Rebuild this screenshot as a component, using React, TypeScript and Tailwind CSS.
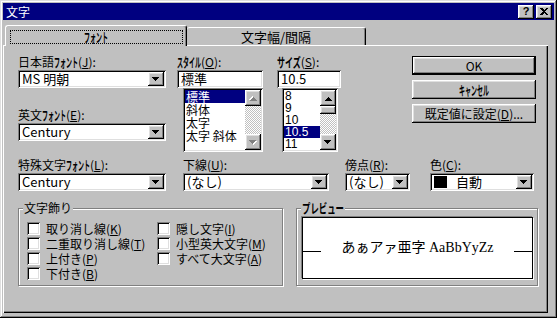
import React from "react";

const raised =
  "bg-[#c0c0c0] shadow-[inset_-1px_-1px_#000,inset_1px_1px_#fff,inset_-2px_-2px_#808080,inset_2px_2px_#dfdfdf]";
const sunken =
  "shadow-[inset_1px_1px_#808080,inset_-1px_-1px_#fff,inset_2px_2px_#000,inset_-2px_-2px_#dfdfdf]";
const checker =
  "bg-[repeating-conic-gradient(#c0c0c0_0%_25%,#ffffff_0%_50%)] bg-[length:2px_2px]";

// katakana squeezed to half width, like the old bitmap UI font
function H({ t, cols }: { t: string; cols?: number }) {
  const n = t.length;
  const target = (cols ?? n) * 6;
  return (
    <span
      className="inline-block origin-left whitespace-nowrap font-bold text-[13px]"
      style={{ transform: `scaleX(${target / (n * 13)})`, marginRight: target - n * 13 }}
    >
      {t}
    </span>
  );
}

function Arrow({ up = false, disabled = false }: { up?: boolean; disabled?: boolean }) {
  const d = "M0 0h7v1h-1v1h-1v1h-1v1h-1v-1h-1v-1h-1v-1h-1z";
  return (
    <svg width="8" height="5" viewBox="0 0 8 5" shapeRendering="crispEdges" className={up ? "rotate-180" : ""}>
      {disabled && <path d={d} fill="#fff" transform="translate(1 1)" />}
      <path d={d} fill={disabled ? "#808080" : "#000"} />
    </svg>
  );
}

function Label({ children }: { children: React.ReactNode }) {
  return <div className="h-[14px] mb-[1px] text-[12px] leading-[14px] whitespace-nowrap">{children}</div>;
}

function Combo({ className, children }: { className: string; children: React.ReactNode }) {
  return (
    <div className={`${className} h-[18px] p-[2px] flex bg-white ${sunken}`}>
      <div className="flex-1 flex items-center pl-[2px] text-[13px] leading-[14px] whitespace-nowrap">{children}</div>
      <div className={`w-[16px] flex items-center justify-center ${raised}`}>
        <Arrow />
      </div>
    </div>
  );
}

function Edit({ className, children }: { className: string; children: React.ReactNode }) {
  return (
    <div className={`${className} h-[18px] p-[2px] pl-[4px] flex items-center bg-white text-[13px] leading-[14px] ${sunken}`}>
      {children}
    </div>
  );
}

function Button({ children, def = false }: { children: React.ReactNode; def?: boolean }) {
  return (
    <div className={def ? "border border-black" : ""}>
      <div
        className={`${raised} ${def ? "h-[17px]" : "h-[19px]"} flex items-center justify-center text-[12px] leading-[14px]`}
      >
        {children}
      </div>
    </div>
  );
}

function Check({ children }: { children: React.ReactNode }) {
  return (
    <div className="h-[15px] flex items-center gap-[6px] text-[12px] leading-[14px] whitespace-nowrap">
      <div className={`w-[13px] h-[13px] bg-white ${sunken}`} />
      <span>{children}</span>
    </div>
  );
}

function Group({ className, title, children }: { className: string; title: React.ReactNode; children: React.ReactNode }) {
  return (
    <div className={`${className} relative h-[78px] border border-[#808080] shadow-[1px_1px_0_#fff,inset_1px_1px_0_#fff]`}>
      <span className="absolute -top-[8px] left-[4px] bg-[#c0c0c0] px-[1px] text-[12px] leading-[14px]">{title}</span>
      {children}
    </div>
  );
}

export default function App() {
  const styles = ["標準", "斜体", "太字", "太字 斜体"];
  const sizes = ["8", "9", "10", "10.5", "11"];

  return (
    <div className="w-[557px] h-[318px] bg-[#c0c0c0] p-[3px] text-black font-['Noto_Sans_CJK_JP','Noto_Sans',sans-serif] shadow-[inset_-1px_-1px_#000,inset_1px_1px_#dfdfdf,inset_-2px_-2px_#808080,inset_2px_2px_#fff] overflow-hidden">
      {/* Title bar */}
      <div className="h-[17px] bg-[#000080] flex items-center pl-[3px] pr-[2px]">
        <span className="flex-1 text-white text-[12px] leading-[14px]">文字</span>
        <div className={`${raised} w-[16px] h-[14px] flex items-center justify-center text-[11px] font-bold leading-none font-['Liberation_Sans',sans-serif]`}>
          ?
        </div>
        <div className={`${raised} ml-[2px] w-[16px] h-[14px] flex items-center justify-center`}>
          <svg width="8" height="7" viewBox="0 0 8 7" shapeRendering="crispEdges">
            <path d="M0 0h2l2 2 2-2h2l-3 3.5 3 3.5h-2l-2-2-2 2h-2l3-3.5z" fill="#000" />
          </svg>
        </div>
      </div>

      {/* Tabs */}
      <div className="h-[25px] flex items-end pl-[2px]">
        <div className="relative z-10 -mb-[1px] w-[182px] h-[21px] bg-[#c0c0c0] rounded-t-[3px] border-t border-l border-white border-r border-r-black shadow-[inset_-1px_0_#808080] pt-[4px] flex justify-center">
          <div className="w-[173px] h-[14px] border border-dotted border-black flex items-center justify-center text-[12px] leading-[12px]">
            <H t="フォント" />
          </div>
        </div>
        <div className="w-[179px] h-[18px] rounded-t-[3px] border-t border-white border-r border-r-black shadow-[inset_-1px_0_#808080] flex items-center justify-center text-[13px] leading-[14px]">
          文字幅/間隔
        </div>
      </div>

      {/* Panel */}
      <div className="w-[545px] h-[268px] shadow-[inset_1px_1px_#fff,inset_-1px_-1px_#000,inset_-2px_-2px_#808080] pt-[10px] pl-[15px]">
        {/* Row 1 */}
        <div className="flex items-start">
          <div className="w-[148px]">
            <Label>
              日本語<H t="フォント" />(<u>J</u>):
            </Label>
            <Combo className="w-[148px]">MS 明朝</Combo>
            <div className="mt-[20px]">
              <Label>
                英文<H t="フォント" />(<u>E</u>):
              </Label>
              <Combo className="w-[148px]">Century</Combo>
            </div>
          </div>

          <div className="ml-[11px] w-[86px]">
            <Label>
              <H t="スタイル" />(<u>O</u>):
            </Label>
            <Edit className="w-[86px]">標準</Edit>
            <div className={`ml-[6px] w-[80px] h-[64px] bg-white p-[2px] flex ${sunken}`}>
              <div className="flex-1 text-[12px] leading-[13px]">
                {styles.map((s, i) => (
                  <div key={s} className={`h-[13px] pl-[1px] whitespace-nowrap ${i === 0 ? "bg-[#000080] text-white" : ""}`}>
                    {s}
                  </div>
                ))}
              </div>
              <div className="w-[16px] flex flex-col">
                <div className={`${raised} h-[16px] flex items-center justify-center`}>
                  <Arrow up disabled />
                </div>
                <div className={`flex-1 ${checker}`} />
                <div className={`${raised} h-[16px] flex items-center justify-center`}>
                  <Arrow disabled />
                </div>
              </div>
            </div>
          </div>

          <div className="ml-[14px] w-[64px]">
            <Label>
              <H t="サイズ" cols={4} />(<u>S</u>):
            </Label>
            <Edit className="w-[64px]">10.5</Edit>
            <div className={`ml-[5px] w-[56px] h-[64px] bg-white p-[2px] flex ${sunken}`}>
              <div className="flex-1 text-[12px] leading-[12px] font-['Liberation_Sans',sans-serif]">
                {sizes.map((s, i) => (
                  <div key={s} className={`h-[12px] pl-[1px] ${i === 3 ? "bg-[#000080] text-white" : ""}`}>
                    {s}
                  </div>
                ))}
              </div>
              <div className="w-[16px] flex flex-col">
                <div className={`${raised} h-[16px] flex items-center justify-center`}>
                  <Arrow up />
                </div>
                <div className={`${raised} h-[8px]`} />
                <div className={`flex-1 ${checker}`} />
                <div className={`${raised} h-[16px] flex items-center justify-center`}>
                  <Arrow />
                </div>
              </div>
            </div>
          </div>

          <div className="ml-[71px] w-[124px] pt-[1px] flex flex-col gap-[5px]">
            <Button def>
              <span className="font-normal">OK</span>
            </Button>
            <Button>
              <H t="キャンセル" />
            </Button>
            <Button>
              既定値に設定(<u>D</u>)...
            </Button>
          </div>
        </div>

        {/* Row 2 */}
        <div className="mt-[6px] flex items-start">
          <div className="w-[148px]">
            <Label>
              特殊文字<H t="フォント" />(<u>L</u>):
            </Label>
            <Combo className="w-[148px]">Century</Combo>
          </div>
          <div className="ml-[17px] w-[146px]">
            <Label>
              下線(<u>U</u>):
            </Label>
            <Combo className="w-[146px]">(なし)</Combo>
          </div>
          <div className="ml-[16px] w-[65px]">
            <Label>
              傍点(<u>R</u>):
            </Label>
            <Combo className="w-[65px]">(なし)</Combo>
          </div>
          <div className="ml-[20px] w-[104px]">
            <Label>
              色(<u>C</u>):
            </Label>
            <Combo className="w-[104px]">
              <span className="w-[13px] h-[12px] bg-black mr-[9px]" />
              自動
            </Combo>
          </div>
        </div>

        {/* Row 3 */}
        <div className="mt-[17px] flex items-start">
          <Group className="w-[265px]" title="文字飾り">
            <div className="pt-[12px] pl-[8px] flex">
              <div className="w-[130px]">
                <Check>
                  取り消し線(<u>K</u>)
                </Check>
                <Check>
                  二重取り消し線(<u>T</u>)
                </Check>
                <Check>
                  上付き(<u>P</u>)
                </Check>
                <Check>
                  下付き(<u>B</u>)
                </Check>
              </div>
              <div>
                <Check>
                  隠し文字(<u>I</u>)
                </Check>
                <Check>
                  小型英大文字(<u>M</u>)
                </Check>
                <Check>
                  すべて大文字(<u>A</u>)
                </Check>
              </div>
            </div>
          </Group>

          <Group className="ml-[13px] w-[242px]" title={<H t="プレビュー" cols={7} />}>
            <div className="ml-[5px] mt-[8px] w-[231px] h-[62px] bg-white border border-black shadow-[-1px_-1px_0_#808080,1px_1px_0_#fff] flex items-center">
              <div className="w-full flex items-baseline">
                <div className="w-[18px] h-px bg-black" />
                <div className="flex-1 text-center text-[14px] leading-[16px] font-['Liberation_Serif','Noto_Sans_CJK_JP',serif]">
                  あぁアァ亜字 AaBbYyZz
                </div>
                <div className="w-[18px] h-px bg-black" />
              </div>
            </div>
          </Group>
        </div>
      </div>
    </div>
  );
}
